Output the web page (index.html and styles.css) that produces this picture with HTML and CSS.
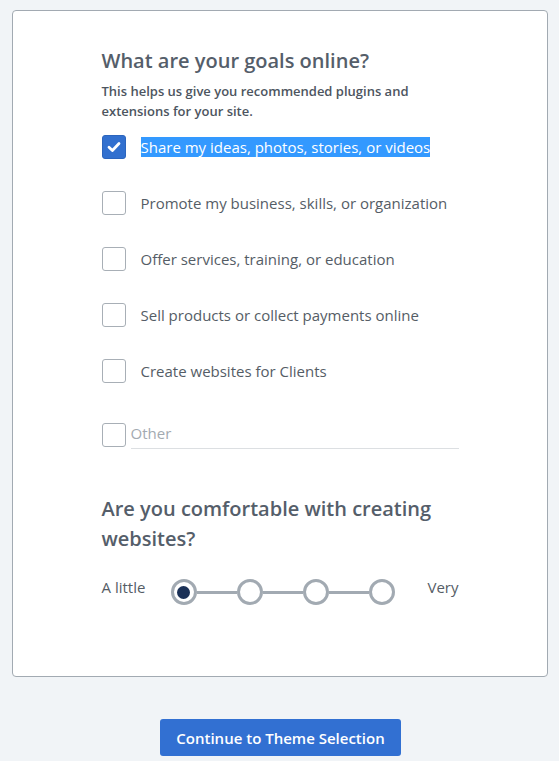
FILE: index.html
```html
<!DOCTYPE html>
<html>
<head>
<meta charset="utf-8">
<link rel="stylesheet" href="styles.css">
</head>
<body>
<div class="card">
  <div class="column">
    <h1 class="title">What are your goals online?</h1>
    <p class="subtitle">This helps us give you recommended plugins and extensions for your site.</p>
    <ul class="options">
      <li class="option">
        <span class="box checked">
          <svg width="14" height="12" viewBox="0 0 14 12"><path d="M2 6.2 L5.4 9.4 L12 2.6" fill="none" stroke="#fff" stroke-width="2.8" stroke-linecap="round" stroke-linejoin="round"/></svg>
        </span>
        <span class="label"><span class="selected">Share my ideas, photos, stories, or videos</span></span>
      </li>
      <li class="option"><span class="box"></span><span class="label">Promote my business, skills, or organization</span></li>
      <li class="option"><span class="box"></span><span class="label">Offer services, training, or education</span></li>
      <li class="option"><span class="box"></span><span class="label">Sell products or collect payments online</span></li>
      <li class="option"><span class="box"></span><span class="label">Create websites for Clients</span></li>
      <li class="option other"><span class="box"></span><span class="other-input">Other</span></li>
    </ul>
    <h2 class="title second">Are you comfortable with creating websites?</h2>
    <div class="scale">
      <span class="scale-label first">A little</span>
      <div class="track">
        <span class="dot active"></span>
        <span class="line"></span>
        <span class="dot"></span>
        <span class="line"></span>
        <span class="dot"></span>
        <span class="line"></span>
        <span class="dot"></span>
      </div>
      <span class="scale-label last">Very</span>
    </div>
  </div>
</div>
<div class="actions">
  <button class="continue">Continue to Theme Selection</button>
</div>
</body>
</html>
```
FILE: styles.css
```css
html, body {
  margin: 0;
  padding: 0;
}
body {
  background: #f1f4f7;
  font-family: "Open Sans", "Noto Sans", sans-serif;
  padding: 10px 11px 0 12px;
  color: #555d66;
}
.card {
  background: #fff;
  border: 1px solid #a2aab2;
  border-radius: 4px;
  box-sizing: border-box;
  height: 667px;
  display: flex;
  justify-content: center;
  padding-top: 35px;
}
.column {
  width: 358px;
  margin-left: 1px;
}
.title {
  margin: 0;
  font-size: 20px;
  line-height: 30px;
  font-weight: 600;
  color: #555e6a;
}
.subtitle {
  margin: 6px 0 0;
  font-size: 13px;
  line-height: 19.5px;
  font-weight: 600;
  color: #4d5560;
  width: 330px;
}
.options {
  list-style: none;
  margin: 14px 0 0;
  padding: 0;
  display: flex;
  flex-direction: column;
  gap: 32px;
}
.option {
  display: flex;
  align-items: center;
  height: 24px;
}
.box {
  width: 24px;
  height: 24px;
  box-sizing: border-box;
  border: 1px solid #a8afb6;
  border-radius: 3px;
  flex: none;
  display: flex;
  align-items: center;
  justify-content: center;
}
.box.checked {
  background: #3270cf;
  border-color: #2c65bd;
}
.label {
  margin-left: 15px;
  font-size: 15px;
  line-height: 20px;
  color: #555d66;
  margin-top: -1px;
}
.selected {
  background: #3399ff;
  color: #fff;
}
.option.other {
  margin-top: 8px;
  align-items: flex-start;
  height: 27px;
}
.other-input {
  margin-left: 5px;
  flex: 0 0 328px;
  height: 25px;
  border-bottom: 1px solid #dcdfe2;
  font-size: 15px;
  line-height: 20px;
  color: #a3aab1;
}
.second {
  margin-top: 44px;
}
.scale {
  margin-top: 25px;
  display: flex;
  align-items: center;
  width: 357px;
}
.scale-label {
  font-size: 15px;
  line-height: 20px;
  color: #555d66;
  margin-top: -11px;
}
.scale-label.first {
  width: 69px;
  flex: none;
}
.scale-label.last {
  margin-left: auto;
}
.track {
  display: flex;
  align-items: center;
}
.dot {
  width: 26px;
  height: 26px;
  box-sizing: border-box;
  border: 3px solid #a2aab2;
  border-radius: 50%;
  background: #fff;
  display: flex;
  align-items: center;
  justify-content: center;
}
.dot.active::after {
  content: "";
  width: 13px;
  height: 13px;
  border-radius: 50%;
  background: #1b3157;
}
.line {
  width: 40px;
  height: 3px;
  background: #a2aab2;
}
.actions {
  display: flex;
  justify-content: center;
  margin-top: 42px;
}
.continue {
  background: #3270d2;
  color: #fff;
  border: none;
  border-radius: 3px;
  width: 241px;
  height: 37px;
  font-family: "Open Sans", "Noto Sans", sans-serif;
  font-size: 15px;
  font-weight: 600;
  padding: 0;
  margin-left: 1px;
}
```
